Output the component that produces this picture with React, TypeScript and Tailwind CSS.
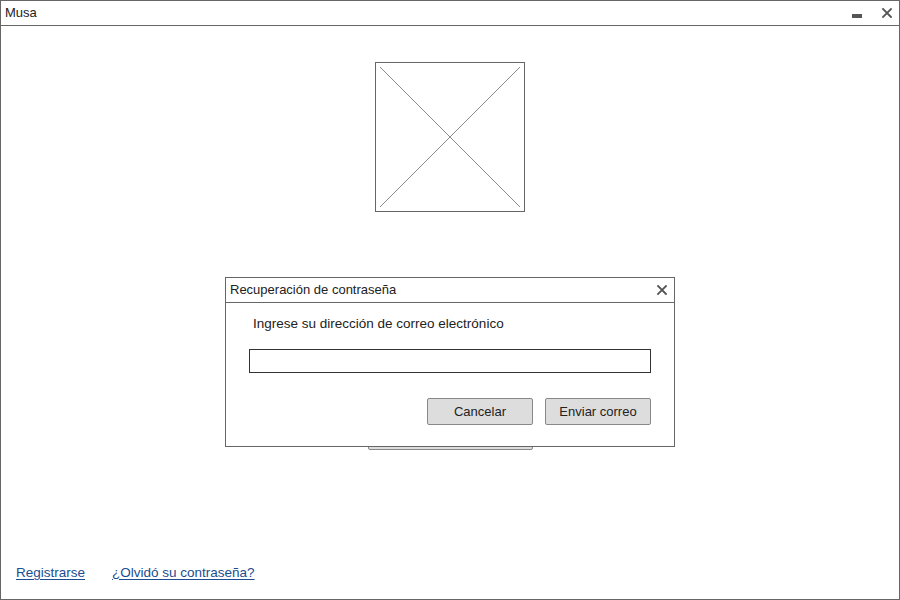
import React from "react";

const font = { fontFamily: '"Liberation Sans", Arial, sans-serif' };

function ImagePlaceholder() {
  return (
    <div className="w-[150px] h-[150px] border border-[#666] bg-white">
      <svg width="148" height="148" viewBox="0 0 148 148" className="block">
        <line x1="4" y1="4" x2="144" y2="144" stroke="#8a8a8a" strokeWidth="1" />
        <line x1="144" y1="4" x2="4" y2="144" stroke="#8a8a8a" strokeWidth="1" />
      </svg>
    </div>
  );
}

function CloseIcon({ size = 11 }: { size?: number }) {
  return (
    <svg width={size} height={size} viewBox="0 0 10 10" className="block">
      <path d="M1 1 L9 9 M9 1 L1 9" stroke="#555" strokeWidth="1.8" strokeLinecap="square" />
    </svg>
  );
}

function RecoveryDialog() {
  return (
    <div className="absolute left-[224px] top-[276px] w-[450px] h-[170px] bg-white border border-[#666] flex flex-col">
      <div className="h-[25px] border-b border-[#666] flex items-center justify-between pl-[4px] pr-[7px]">
        <span className="text-[13px] text-[#222]">Recuperación de contraseña</span>
        <CloseIcon size={10} />
      </div>
      <div className="pl-[27px] pt-[11px] text-[13.5px] text-[#222]">
        Ingrese su dirección de correo electrónico
      </div>
      <div className="ml-[23px] mt-[15px] w-[402px] h-[24px] border border-[#333] bg-white" />
      <div className="flex justify-end gap-[12px] mr-[23px] mt-[25px]">
        <button className="w-[106px] h-[27px] bg-[#ddd] border border-[#888] rounded-[2px] text-[13px] text-[#222]">
          Cancelar
        </button>
        <button className="w-[106px] h-[27px] bg-[#ddd] border border-[#888] rounded-[2px] text-[13px] text-[#222]">
          Enviar correo
        </button>
      </div>
    </div>
  );
}

export default function App() {
  return (
    <div style={font} className="relative w-[900px] h-[600px] bg-white border border-[#666] flex flex-col">
      {/* window title bar */}
      <div className="h-[25px] border-b border-[#666] flex items-center justify-between pl-[4px] pr-[7px]">
        <span className="text-[13px] text-[#222]">Musa</span>
        <div className="flex items-center gap-[20px]">
          <div className="w-[10px] h-[4px] bg-[#555] mt-[6px]" />
          <CloseIcon size={10} />
        </div>
      </div>

      {/* main content */}
      <div className="flex-1 flex flex-col items-center">
        <div className="mt-[36px]">
          <ImagePlaceholder />
        </div>
        <div className="mt-[208px] w-[165px] h-[30px] bg-[#ddd] border border-[#888] rounded-[2px] ml-[1px]" />
        <div className="mt-auto self-start flex gap-[27px] pl-[15px] pb-[16px] text-[13.5px]">
          <a className="text-[#1b4d8f] underline underline-offset-2 decoration-[#1b4d8f]">Registrarse</a>
          <a className="text-[#1b4d8f] underline underline-offset-2 decoration-[#1b4d8f]">¿Olvidó su contraseña?</a>
        </div>
      </div>

      <RecoveryDialog />
    </div>
  );
}
